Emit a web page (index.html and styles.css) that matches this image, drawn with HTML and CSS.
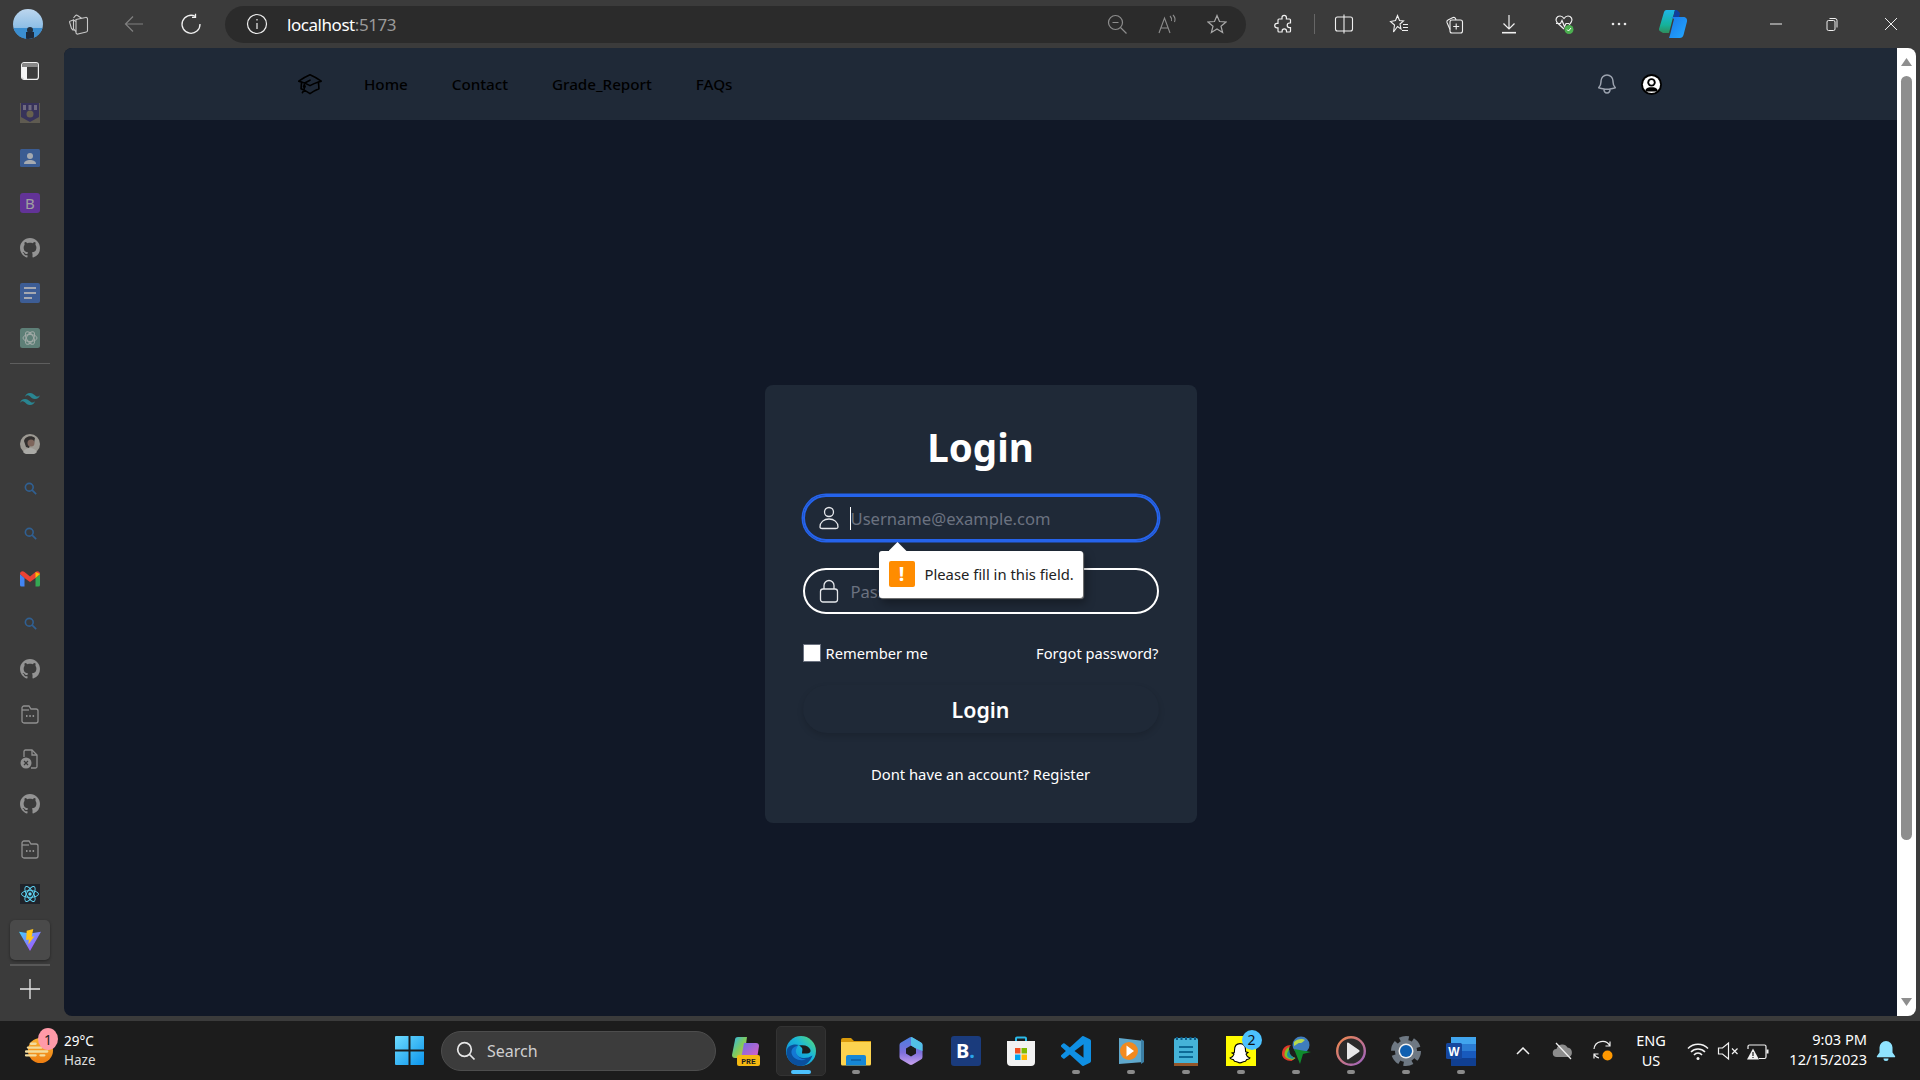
FILE: index.html
```html
<!DOCTYPE html>
<html lang="en">
<head>
<meta charset="utf-8">
<title>Login</title>
<link rel="stylesheet" href="styles.css">
</head>
<body>
<div class="shell">
  <header class="topbar">
    <svg class="avatar" viewBox="0 0 30 30"><defs><linearGradient id="sky" x1="0" y1="0" x2="0" y2="1"><stop offset="0" stop-color="#bcd6ee"/><stop offset=".6" stop-color="#8fbfe6"/><stop offset="1" stop-color="#3f86c6"/></linearGradient><clipPath id="avc"><circle cx="15" cy="15" r="15"/></clipPath></defs><g clip-path="url(#avc)"><rect width="30" height="30" fill="url(#sky)"/><rect y="19" width="30" height="11" fill="#3b8ed0"/><circle cx="17" cy="21" r="3" fill="#26303c"/><rect x="13" y="23" width="8" height="7" fill="#1f2a3a"/></g></svg>
    <span class="slot"><svg class="ico-tabs" viewBox="0 0 22 24" fill="none" stroke="#c8c8c8" stroke-width="1.100"><path d="M9 7.500 18.500 5.500A1.500 1.500 0 0 1 20.500 7V18.500a1.500 1.500 0 0 1-1.200 1.500L11 22a1.500 1.500 0 0 1-2-1.500z"/><path d="M9 9.500 6.500 8V17l2.500 2.500"/><path d="M14.500 6.300 10.500 3.500a1.500 1.500 0 0 0-2 .2L6.500 6"/><path d="M6.500 8 3.500 9a1 1 0 0 0-.8 1.500L4.500 16.500l2 2"/></svg></span>
    <span class="slot"><svg class="ico" viewBox="0 0 20 20" fill="none" stroke="#808080" stroke-width="1.200"><path d="M19 10H1.500M9 2.500 1.500 10 9 17.500"/></svg></span>
    <span class="slot"><svg class="ico-lg" viewBox="0 0 22 22" fill="none" stroke="#f0f0f0" stroke-width="1.300"><path d="M15.500 3.500A9 9 0 1 0 20 11"/><path d="M15.500 .8V4.300H12"/></svg></span>
    <div class="address">
      <svg class="info" viewBox="0 0 22 22" fill="none" stroke="#eee" stroke-width="1.200"><circle cx="11" cy="11" r="9.500"/><path d="M11 10v6M11 6v1.600"/></svg>
      <span class="url">localhost<span class="url-port">:5173</span></span>
      <div class="addr-tools">
        <span class="tool"><svg class="ico" viewBox="0 0 20 20" fill="none" stroke="#8d8d8d" stroke-width="1.200"><circle cx="8.500" cy="8.500" r="7"/><path d="M5.500 8.500h6M13.500 13.500l6 6"/></svg></span>
        <span class="tool"><svg class="ico" viewBox="0 0 20 20" fill="none" stroke="#8d8d8d" stroke-width="1.100"><path d="M2 19 7.500 4 13 19M4 14h7M13 2c1.500 1.500 2 3 1.500 5M16 1c2 2 2.500 4.500 1.500 7"/></svg></span>
        <span class="tool"><svg class="ico" viewBox="0 0 20 20" fill="none" stroke="#a8a8a8" stroke-width="1.200"><path d="M10 1.500 12.500 7.500 19 8 14 12.200 15.600 18.500 10 15 4.400 18.500 6 12.200 1 8 7.500 7.500z"/></svg></span>
      </div>
    </div>
    <div class="browser-tools">
      <span class="slot55"><svg class="ico" viewBox="0 0 20 20" fill="none" stroke="#f0f0f0" stroke-width="1.200"><path d="M8 3.500a2.200 2.200 0 0 1 4.400 0V5h3.100a1 1 0 0 1 1 1v3h-1a2.300 2.300 0 0 0 0 4.600h1V17a1 1 0 0 1-1 1h-3v-1a2.200 2.200 0 0 0-4.400 0v1H5a1 1 0 0 1-1-1v-3.100H3a2.300 2.300 0 0 1 0-4.600h1V6a1 1 0 0 1 1-1h3z"/></svg></span>
      <i class="divider"></i>
      <span class="slot55"><svg class="ico" viewBox="0 0 20 20" fill="none" stroke="#f0f0f0" stroke-width="1.100"><rect x="1.500" y="3" width="17" height="14" rx="2"/><path d="M10 .5v19"/></svg></span>
      <span class="slot55"><svg class="ico" viewBox="0 0 20 20" fill="none" stroke="#f0f0f0" stroke-width="1.100"><path d="M8.500 1.500 10.500 6.500 14.500 7 11 10 12 15 8.500 12.500 4.500 18 5.500 11 1.500 7.500 6.500 6.500z"/><path d="M14 10.500h5M14 13.500h5M13 16.500h6"/></svg></span>
      <span class="slot55"><svg class="ico" viewBox="0 0 20 20" fill="none" stroke="#f0f0f0" stroke-width="1.100"><rect x="6" y="6" width="12.500" height="13" rx="2"/><path d="M12.200 9.500v6M9.200 12.500h6M6 15.500 3 8.500a2 2 0 0 1 1-2.500l5-2.500a2 2 0 0 1 2.500 1L12 6"/></svg></span>
      <span class="slot55"><svg class="ico" viewBox="0 0 20 20" fill="none" stroke="#f0f0f0" stroke-width="1.200"><path d="M10 1v14M4.500 9.500 10 15l5.500-5.500"/><path d="M3 18.700h14" stroke-width="1.600"/></svg></span>
      <span class="slot55"><svg class="ico" viewBox="0 0 20 20" fill="none" stroke="#f0f0f0" stroke-width="1.200"><path d="M10 15 3 8.500C.5 5.500 3 2 6 2c2 0 3 1 4 2.500C11 3 12 2 14 2c3 0 5.500 3.500 3 6.500L15 11"/><path d="M2 9.500h4.500l1.500-3 2.500 6 1.500-3h3"/><circle cx="15" cy="15.500" r="4.500" fill="#4caf50" stroke="none"/><path d="M13 15.500l1.500 1.500 2.500-3" stroke="#fff" stroke-width="1"/></svg></span>
      <span class="slot55"><svg class="ico" viewBox="0 0 20 20" fill="#e8e8e8"><circle cx="4" cy="10" r="1.300"/><circle cx="10" cy="10" r="1.300"/><circle cx="16" cy="10" r="1.300"/></svg></span>
      <span class="slot55 slot-copilot"><svg class="ico-copilot" viewBox="0 0 30 30"><defs><linearGradient id="cpa" x1="0" y1="0" x2="0" y2="1"><stop offset="0" stop-color="#1fb6e8"/><stop offset=".65" stop-color="#15b29a"/><stop offset="1" stop-color="#2f8d5c"/></linearGradient><linearGradient id="cpb" x1="0" y1="0" x2="1" y2="1"><stop offset="0" stop-color="#1a78e8"/><stop offset="1" stop-color="#23a9ff"/></linearGradient></defs><path d="M8 1h9l-.5 1.500L11 24H5L1.800 22A2 2 0 0 1 1 20L6 3a3 3 0 0 1 2-2z" fill="url(#cpa)"/><path d="M17 1h2l3 3-1 5h-6z" fill="#0f3f9e"/><path d="M13 8h12c3 0 4.500 2 4 4.500L25.500 26a4 4 0 0 1-4 3H11l1-3 4-16z" fill="url(#cpb)"/></svg></span>
      <div class="win-controls">
        <span class="win"><svg class="ico-sm" viewBox="0 0 14 14" stroke="#eee"><path d="M1 7h12"/></svg></span>
        <span class="win"><svg class="ico-sm" viewBox="0 0 14 14" fill="none" stroke="#eee"><rect x="2" y="3.500" width="8" height="10" rx="1.500"/><path d="M4.500 1.500H10a2 2 0 0 1 2 2v7"/></svg></span>
        <span class="win win-close"><svg class="ico-sm" viewBox="0 0 14 14" stroke="#eee"><path d="M1 1l12 12M13 1 1 13"/></svg></span>
      </div>
    </div>
  </header>

  <div class="middle">
    <aside class="side">
      <span class="side-item side-first"><svg class="side-tab" viewBox="0 0 18 18"><rect x=".6" y=".6" width="16.800" height="16.800" rx="2.500" fill="#3b3b3b" stroke="#f0f0f0" stroke-width="1.200"/><path d="M1 3a2 2 0 0 1 2-2h12a2 2 0 0 1 2 2v2H1z" fill="#888"/><path d="M1 5h5v12H3a2 2 0 0 1-2-2z" fill="#f4f4f4"/></svg></span>
      <span class="side-item dim"><svg class="side-ico" viewBox="0 0 20 20"><rect width="20" height="20" fill="#75705f"/><path d="M1 0h18v14l-9 5-9-5z" fill="#352f6e"/><path d="M3 2h3v5H3zM8.500 2h3v5h-3zM14 2h3v5h-3z" fill="#8f88a8"/><circle cx="10" cy="11" r="3.500" fill="#85795a"/></svg></span>
      <span class="side-item dim"><svg class="side-ico" viewBox="0 0 20 20"><rect y="1" width="20" height="18" rx="1.500" fill="#3c71c8"/><circle cx="10" cy="8" r="3" fill="#e8eef8"/><path d="M4 16c0-3 3-4 6-4s6 1 6 4z" fill="#e8eef8"/></svg></span>
      <span class="side-item dim"><span class="boot">B</span></span>
      <span class="side-item dim"><svg class="side-ico" viewBox="0 0 16 16" fill="#c9c9c9"><path d="M8 0C3.580 0 0 3.580 0 8c0 3.540 2.290 6.530 5.470 7.590.4.070.55-.17.55-.38 0-.19-.01-.82-.01-1.490-2.010.37-2.530-.49-2.690-.94-.09-.23-.48-.94-.82-1.130-.28-.15-.68-.52-.01-.53.63-.01 1.080.58 1.230.82.720 1.210 1.870.87 2.330.66.070-.52.28-.87.51-1.070-1.780-.2-3.640-.89-3.640-3.950 0-.87.31-1.590.82-2.150-.08-.2-.36-1.020.08-2.120 0 0 .67-.21 2.200.82.64-.18 1.320-.27 2-.27.68 0 1.360.09 2 .27 1.530-1.040 2.200-.82 2.200-.82.44 1.100.16 1.920.08 2.120.51.56.82 1.270.82 2.150 0 3.070-1.870 3.750-3.650 3.950.29.25.54.73.54 1.480 0 1.070-.01 1.930-.01 2.200 0 .21.15.46.55.38A8.013 8.013 0 0 0 16 8c0-4.420-3.580-8-8-8z"/></svg></span>
      <span class="side-item dim"><svg class="side-ico" viewBox="0 0 20 20"><rect width="20" height="20" rx="2" fill="#3f73cc"/><path d="M4 5h12M4 10h12M4 15h8" stroke="#e6ecf8" stroke-width="2"/></svg></span>
      <span class="side-item dim"><svg class="side-ico" viewBox="0 0 20 20"><rect width="20" height="20" rx="2.500" fill="#74aa9c"/><g fill="none" stroke="#dfeee9" stroke-width="1"><ellipse cx="10" cy="10" rx="7" ry="3.500"/><ellipse cx="10" cy="10" rx="7" ry="3.500" transform="rotate(60 10 10)"/><ellipse cx="10" cy="10" rx="7" ry="3.500" transform="rotate(120 10 10)"/></g></svg></span>
      <i class="side-sep"></i>
      <span class="side-item dim"><svg class="side-ico" viewBox="0 0 54 33" fill="#1fb3c6"><path d="M27 0c-7.200 0-11.700 3.600-13.500 10.800 2.700-3.600 5.850-4.950 9.450-4.050 2.054.513 3.522 2.004 5.147 3.653C30.744 13.090 33.808 16.200 40.500 16.200c7.200 0 11.700-3.600 13.500-10.800-2.700 3.600-5.850 4.950-9.450 4.050-2.054-.513-3.522-2.004-5.147-3.653C36.756 3.110 33.692 0 27 0zM13.500 16.200C6.300 16.200 1.800 19.800 0 27c2.700-3.600 5.850-4.950 9.450-4.050 2.054.514 3.522 2.004 5.147 3.653C17.244 29.290 20.308 32.400 27 32.400c7.200 0 11.700-3.600 13.500-10.800-2.700 3.600-5.850 4.950-9.450 4.050-2.054-.513-3.522-2.004-5.147-3.653C23.256 19.310 20.192 16.200 13.500 16.200z"/></svg></span>
      <span class="side-item dim"><svg class="side-ico" viewBox="0 0 20 20"><circle cx="10" cy="10" r="10" fill="#d8d3c8"/><path d="M4 7c1-5 8-6 11-3l-1 5-3-1-2 6-3-1z" fill="#2f2a28"/><circle cx="11" cy="9" r="3.500" fill="#a88070"/><path d="M3 18c2-3 4-4 7-4s5 1 7 4a10 10 0 0 1-14 0z" fill="#efeee8"/></svg></span>
      <span class="side-item dim"><svg class="side-search" viewBox="0 0 16 16" fill="none" stroke="#2a77c8" stroke-width="2"><circle cx="6.500" cy="6.500" r="4.800"/><path d="M10 10l5 5"/></svg></span>
      <span class="side-item dim"><svg class="side-search" viewBox="0 0 16 16" fill="none" stroke="#2a77c8" stroke-width="2"><circle cx="6.500" cy="6.500" r="4.800"/><path d="M10 10l5 5"/></svg></span>
      <span class="side-item"><svg class="side-ico" viewBox="0 0 20 16"><path d="M0 3v11a1.500 1.500 0 0 0 1.500 1.500H4.500V7z" fill="#4285f4"/><path d="M15.500 7v8.500h3A1.500 1.500 0 0 0 20 14V3z" fill="#34a853"/><path d="M0 3C0 .5 2.500-.5 4.500 1L10 5.500 15.500 1C17.500-.5 20 .5 20 3l-4.500 4L10 11 4.500 7z" fill="#ea4335"/><path d="M15.500 1 20 3l-4.500 4z" fill="#fbbc04"/></svg></span>
      <span class="side-item dim"><svg class="side-search" viewBox="0 0 16 16" fill="none" stroke="#2a77c8" stroke-width="2"><circle cx="6.500" cy="6.500" r="4.800"/><path d="M10 10l5 5"/></svg></span>
      <span class="side-item dim"><svg class="side-ico" viewBox="0 0 16 16" fill="#c9c9c9"><path d="M8 0C3.580 0 0 3.580 0 8c0 3.540 2.290 6.530 5.470 7.590.4.070.55-.17.55-.38 0-.19-.01-.82-.01-1.490-2.010.37-2.530-.49-2.690-.94-.09-.23-.48-.94-.82-1.130-.28-.15-.68-.52-.01-.53.63-.01 1.080.58 1.230.82.720 1.210 1.870.87 2.330.66.070-.52.28-.87.51-1.070-1.780-.2-3.640-.89-3.640-3.950 0-.87.31-1.590.82-2.150-.08-.2-.36-1.020.08-2.120 0 0 .67-.21 2.200.82.64-.18 1.320-.27 2-.27.68 0 1.360.09 2 .27 1.530-1.040 2.200-.82 2.200-.82.44 1.100.16 1.920.08 2.120.51.56.82 1.270.82 2.150 0 3.070-1.870 3.750-3.650 3.950.29.25.54.73.54 1.480 0 1.070-.01 1.930-.01 2.200 0 .21.15.46.55.38A8.013 8.013 0 0 0 16 8c0-4.420-3.580-8-8-8z"/></svg></span>
      <span class="side-item dim"><svg class="side-ico" viewBox="0 0 20 20" fill="none" stroke="#c4c4c4" stroke-width="1.300"><path d="M2 17V4a2 2 0 0 1 2-2h5l2 3h5a2 2 0 0 1 2 2v10a2 2 0 0 1-2 2H4a2 2 0 0 1-2-2z"/><path d="M2 6h7"/><path d="M6 12h1.500M9.300 12h1.500M12.600 12h1.500" stroke-width="2"/></svg></span>
      <span class="side-item dim"><svg class="side-ico" viewBox="0 0 20 20" fill="none" stroke="#c4c4c4" stroke-width="1.300"><path d="M4 8V2.500A1.500 1.500 0 0 1 5.500 1H12l5 5v11.500a1.500 1.500 0 0 1-1.500 1.500H11"/><path d="M12 1v5h5"/><circle cx="6" cy="14" r="5.500" fill="#c4c4c4" stroke="none"/><path d="M4 12l4 4M8 12l-4 4" stroke="#3b3b3b"/></svg></span>
      <span class="side-item dim"><svg class="side-ico" viewBox="0 0 16 16" fill="#c9c9c9"><path d="M8 0C3.580 0 0 3.580 0 8c0 3.540 2.290 6.530 5.470 7.590.4.070.55-.17.55-.38 0-.19-.01-.82-.01-1.490-2.010.37-2.530-.49-2.690-.94-.09-.23-.48-.94-.82-1.130-.28-.15-.68-.52-.01-.53.63-.01 1.080.58 1.230.82.720 1.210 1.870.87 2.330.66.070-.52.28-.87.51-1.070-1.780-.2-3.640-.89-3.640-3.950 0-.87.31-1.590.82-2.150-.08-.2-.36-1.020.08-2.120 0 0 .67-.21 2.200.82.64-.18 1.320-.27 2-.27.68 0 1.360.09 2 .27 1.530-1.040 2.200-.82 2.200-.82.44 1.100.16 1.920.08 2.120.51.56.82 1.270.82 2.150 0 3.070-1.870 3.750-3.650 3.950.29.25.54.73.54 1.480 0 1.070-.01 1.930-.01 2.200 0 .21.15.46.55.38A8.013 8.013 0 0 0 16 8c0-4.420-3.580-8-8-8z"/></svg></span>
      <span class="side-item dim"><svg class="side-ico" viewBox="0 0 20 20" fill="none" stroke="#c4c4c4" stroke-width="1.300"><path d="M2 17V4a2 2 0 0 1 2-2h5l2 3h5a2 2 0 0 1 2 2v10a2 2 0 0 1-2 2H4a2 2 0 0 1-2-2z"/><path d="M2 6h7"/><path d="M6 12h1.500M9.300 12h1.500M12.600 12h1.500" stroke-width="2"/></svg></span>
      <span class="side-item"><svg class="side-ico" viewBox="0 0 20 20"><rect width="20" height="20" fill="#20232a"/><g fill="none" stroke="#61dafb" stroke-width=".9"><ellipse cx="10" cy="10" rx="8.500" ry="3.400"/><ellipse cx="10" cy="10" rx="8.500" ry="3.400" transform="rotate(60 10 10)"/><ellipse cx="10" cy="10" rx="8.500" ry="3.400" transform="rotate(120 10 10)"/></g><circle cx="10" cy="10" r="1.700" fill="#61dafb"/></svg></span>
      <span class="side-item side-item-active"><span class="side-active"><svg class="side-vite" viewBox="0 0 20 20"><defs><linearGradient id="vt" x1="0" y1="0" x2="1" y2="1"><stop offset="0" stop-color="#41d1ff"/><stop offset="1" stop-color="#bd34fe"/></linearGradient></defs><path d="M0 2.500 10 4l10-1.500L10 20z" fill="url(#vt)"/><path d="M13 0 7 1.500 6.500 10 9 9.500 8.500 14 14 6.500 11.500 7z" fill="#ffc517"/></svg></span></span>
      <i class="side-sep2"></i>
      <span class="side-add"><svg class="side-ico" viewBox="0 0 18 18" stroke="#e8e8e8" stroke-width="1.200"><path d="M9 0v18M0 9h18"/></svg></span>
    </aside>

    <div class="content">
      <nav class="nav">
        <svg class="nav-logo" viewBox="0 0 24 24" fill="none" stroke="#000" stroke-width="1.500" stroke-linecap="round" stroke-linejoin="round"><path d="M4.260 10.147a60.436 60.436 0 0 0-.491 6.347A48.627 48.627 0 0 1 12 20.904a48.627 48.627 0 0 1 8.232-4.410 60.460 60.460 0 0 0-.491-6.347m-15.482 0a50.570 50.570 0 0 0-2.658-.813A59.905 59.905 0 0 1 12 3.493a59.902 59.902 0 0 1 10.399 5.840c-.896.248-1.783.52-2.658.814m-15.482 0A50.697 50.697 0 0 1 12 13.489a50.702 50.702 0 0 1 7.740-3.342M6.750 15a.75.75 0 1 0 0-1.500.75.75 0 0 0 0 1.500zm0 0v-3.675A55.378 55.378 0 0 1 12 8.443m-7.007 11.550A5.981 5.981 0 0 0 6.750 15.750v-1.500"/></svg>
        <div class="nav-links">
          <a class="nav-link">Home</a>
          <a class="nav-link">Contact</a>
          <a class="nav-link">Grade_Report</a>
          <a class="nav-link">FAQs</a>
        </div>
        <div class="nav-right">
          <svg class="nav-bell" viewBox="0 0 24 24" fill="none" stroke="#9ca3af" stroke-width="1.500" stroke-linecap="round" stroke-linejoin="round"><path d="M14.857 17.082a23.848 23.848 0 0 0 5.454-1.310A8.967 8.967 0 0 1 18 9.750V9A6 6 0 0 0 6 9v.75a8.967 8.967 0 0 1-2.312 6.022c1.733.64 3.560 1.085 5.455 1.310m5.714 0a24.255 24.255 0 0 1-5.714 0m5.714 0a3 3 0 1 1-5.714 0"/></svg>
          <svg class="nav-user" viewBox="0 0 20 20"><circle cx="10" cy="10" r="10" fill="#000"/><circle cx="10" cy="10" r="8.200" fill="#fff"/><circle cx="10" cy="8" r="4" fill="#000"/><circle cx="10" cy="8" r="2.200" fill="#fff"/><path d="M4 15.500c1-2.500 3.500-3 6-3s5 .5 6 3l-1 1.200H5z" fill="#000"/></svg>
        </div>
      </nav>
      <main class="main">
        <form class="card">
          <h1 class="title">Login</h1>
          <div class="field field-focus">
            <svg class="field-ico" viewBox="0 0 20 24" fill="none" stroke="#e5e7eb" stroke-width="1.300"><circle cx="10" cy="6" r="4.500"/><path d="M1 21c0-5 4-8 9-8s9 3 9 8c0 1-1 1.500-2 1.500H3c-1 0-2-.5-2-1.500z"/></svg>
            <input class="input" type="text" placeholder="Username@example.com">
            <i class="caret"></i>
          </div>
          <div class="field">
            <svg class="field-ico" viewBox="0 0 20 24" fill="none" stroke="#e5e7eb" stroke-width="1.300"><rect x="1.500" y="10" width="17" height="13" rx="2.500"/><path d="M5 10V6.500a5 5 0 0 1 10 0V10"/></svg>
            <input class="input" type="password" placeholder="Password">
          </div>
          <div class="row">
            <label class="remember"><span class="check"></span>Remember me</label>
            <a class="forgot">Forgot password?</a>
          </div>
          <button class="submit" type="button">Login</button>
          <p class="register">Dont have an account? Register</p>
          <div class="tip">
            <span class="tip-warn">!</span>
            <span class="tip-text">Please fill in this field.</span>
          </div>
        </form>
      </main>
    </div>

    <div class="scrollbar">
      <i class="sb-up"></i>
      <i class="sb-thumb"></i>
      <i class="sb-down"></i>
    </div>
  </div>

  <footer class="taskbar">
    <div class="weather">
      <svg class="weather-ico" viewBox="0 0 30 30"><defs><linearGradient id="sun" x1="0" y1="0" x2="0" y2="1"><stop offset="0" stop-color="#f9b233"/><stop offset="1" stop-color="#ee7d11"/></linearGradient></defs><circle cx="16" cy="15" r="13" fill="url(#sun)"/><path d="M6 8h5M3 12h14M1 16h22M1 20h10M16 20h4" stroke="#f3dc9c" stroke-width="2.400" stroke-linecap="round"/></svg>
      <span class="weather-badge">1</span>
      <div class="weather-text"><span>29°C</span><span class="weather-sub">Haze</span></div>
    </div>
    <svg class="win-logo" viewBox="0 0 29 29"><defs><linearGradient id="wl" x1="0" y1="0" x2="1" y2="1"><stop offset="0" stop-color="#6fdcff"/><stop offset="1" stop-color="#0a94ec"/></linearGradient></defs><path d="M1 0h12.500v13.500H0V1a1 1 0 0 1 1-1zM15.500 0H28a1 1 0 0 1 1 1v12.500H15.500zM0 15.500h13.500V29H1a1 1 0 0 1-1-1zM15.500 15.500H29V28a1 1 0 0 1-1 1H15.500z" fill="url(#wl)"/></svg>
    <div class="search">
      <svg class="search-ico" viewBox="0 0 20 20" fill="none" stroke="#e8e8e8" stroke-width="1.700"><circle cx="8.500" cy="8.500" r="6.800"/><path d="M13.500 13.500l5 5"/></svg>
      <span>Search</span>
    </div>
    <div class="apps">
      <span class="app"><svg class="app-ico" viewBox="0 0 30 30"><defs><linearGradient id="pre" x1="0" y1="0" x2="1" y2="1"><stop offset="0" stop-color="#2ab6ef"/><stop offset=".5" stop-color="#7ecb5e"/><stop offset="1" stop-color="#e5c13e"/></linearGradient><linearGradient id="pre2" x1="0" y1="0" x2="1" y2="1"><stop offset="0" stop-color="#6d6de8"/><stop offset="1" stop-color="#e55fc0"/></linearGradient></defs><path d="M7 1h9l-3 21H4a3 3 0 0 1-3-3L4 4a3 3 0 0 1 3-3z" fill="url(#pre)"/><path d="M13 7h12a3 3 0 0 1 3 3l-2 13H10z" fill="url(#pre2)"/><rect x="6" y="19" width="23" height="11" rx="2" fill="#f5b912"/><text class="pre-text" x="17.500" y="27.700">PRE</text></svg></span>
      <span class="app app-active"><span class="app-box"><svg class="app-ico" viewBox="0 0 30 30"><defs><linearGradient id="edg" x1="1" y1="0" x2="0" y2="1"><stop offset="0" stop-color="#5ee06a"/><stop offset=".4" stop-color="#1ab6d9"/><stop offset="1" stop-color="#0c7fd8"/></linearGradient></defs><circle cx="15" cy="15" r="15" fill="url(#edg)"/><path d="M.5 16C1 9 8 7.500 13 9c-3 1-5 4-3.500 8 2 5 10 7 17 2.500C24 26 19 30 15 30 7 30 .5 24 .5 16z" fill="#0a4f9c"/><path d="M13 9.500c6-1 10 .5 11.500 4.500.5 2-1 3.500-3.500 3.500H16c0-3 2-5.500-3-8z" fill="#1c1c1c"/><path d="M12 10c-2 2-3 5-1.500 8 2 4 6 6 10 5-6 3-14 0-15-6C5 13 8 10 12 10z" fill="#1478d4"/></svg></span></span>
      <span class="app app-open"><svg class="app-ico" viewBox="0 0 30 30"><path d="M0 4a2 2 0 0 1 2-2h8l3 3h17v4H0z" fill="#d99a0b"/><path d="M0 6h30v22a1.500 1.500 0 0 1-1.500 1.500h-27A1.500 1.500 0 0 1 0 28z" fill="#fcd34f"/><path d="M5 21a2 2 0 0 1 2-2h16a2 2 0 0 1 2 2v8.500H5z" fill="#1587d6"/><path d="M10 24h10" stroke="#0c5ea0" stroke-width="1.500"/></svg></span>
      <span class="app"><svg class="app-ico" viewBox="0 0 30 30"><defs><linearGradient id="cbg" x1="0" y1="0" x2="0" y2="1"><stop offset="0" stop-color="#4a7fe0"/><stop offset=".55" stop-color="#7d6fdc"/><stop offset="1" stop-color="#c9a2ee"/></linearGradient></defs><path d="M15 1a3 3 0 0 1 1.500.4L25 6.500a3 3 0 0 1 1.500 2.600V21a3 3 0 0 1-1.500 2.600l-8.500 5a3 3 0 0 1-3 0L5 23.600A3 3 0 0 1 3.500 21V9.100A3 3 0 0 1 5 6.500l8.500-5.100A3 3 0 0 1 15 1z" fill="url(#cbg)"/><path d="M15 9.500 20 12.500v5L15 20.500l-5-3v-5z" fill="#1c1c1c"/><path d="M15 1a3 3 0 0 1 1.500.4L25 6.500a3 3 0 0 1 1.500 2.600V15L20 12.500 15 9.500z" fill="#52c0e6"/></svg></span>
      <span class="app"><span class="booking">B<em class="booking-dot">.</em></span></span>
      <span class="app"><svg class="app-ico" viewBox="0 0 30 30"><path d="M10 6V2.500A1 1 0 0 1 11 1.500h8a1 1 0 0 1 1 1V6" fill="none" stroke="#2bb9e8" stroke-width="2"/><path d="M1 5h28v21a4 4 0 0 1-4 4H5a4 4 0 0 1-4-4z" fill="#f2f2f2"/><rect x="9" y="12" width="5.500" height="5.500" fill="#f25022"/><rect x="15.500" y="12" width="5.500" height="5.500" fill="#7fba00"/><rect x="9" y="18.500" width="5.500" height="5.500" fill="#00a4ef"/><rect x="15.500" y="18.500" width="5.500" height="5.500" fill="#ffb900"/></svg></span>
      <span class="app app-open"><svg class="app-ico" viewBox="0 0 24 24" fill="#0f8fe3"><path d="M23.150 2.587 18.210.21a1.494 1.494 0 0 0-1.705.29l-9.460 8.630-4.120-3.128a.999.999 0 0 0-1.276.057L.327 7.261A1 1 0 0 0 .326 8.740L3.899 12 .326 15.260a1 1 0 0 0 .001 1.479L1.650 17.940a.999.999 0 0 0 1.276.057l4.120-3.128 9.460 8.630a1.492 1.492 0 0 0 1.704.29l4.942-2.377A1.500 1.500 0 0 0 24 20.060V3.939a1.500 1.500 0 0 0-.85-1.352zm-5.146 14.861L10.826 12l7.178-5.448v10.896z"/></svg></span>
      <span class="app app-open"><svg class="app-ico" viewBox="0 0 30 30"><path d="M3 2l25 3v21L3 28z" fill="#5fa8cc"/><path d="M25 3l3 2v21l-3 2z" fill="#3b7fa5"/><circle cx="13" cy="15" r="9" fill="#f28a1f"/><path d="M10.500 9.500 18 15l-7.500 5.500z" fill="#fff"/></svg></span>
      <span class="app app-open"><svg class="app-ico" viewBox="0 0 30 30"><rect x="3" y="2" width="24" height="28" rx="2" fill="#45b3d8"/><rect x="3" y="27" width="24" height="3" fill="#94562a"/><path d="M6 1v3M10.500 1v3M15 1v3M19.500 1v3M24 1v3" stroke="#0c5a86" stroke-width="2"/><path d="M8 11h14M8 16h14M8 21h14" stroke="#0d6a96" stroke-width="2"/></svg></span>
      <span class="app app-open"><span class="snap"><svg class="snap-ghost" viewBox="0 0 20 20"><path d="M10 1.500c3.500 0 5 2.500 5 5.500 0 1 0 1.500.2 2l2 .5-1.700 1.500c.5 2 1.800 3 3.500 3.500-.5 1-2 1.200-3 1.500l-1 1.500c-2 0-3 1.500-5 1.500s-3-1.500-5-1.500l-1-1.500c-1-.3-2.500-.5-3-1.500 1.700-.5 3-1.500 3.500-3.500L2.800 10l2-.5c.2-.5.200-1 .2-2C5 4 6.500 1.500 10 1.500z" fill="#fff" stroke="#000" stroke-width="1"/></svg><span class="snap-badge">2</span></span></span>
      <span class="app app-open"><svg class="app-ico" viewBox="0 0 30 30"><path d="M1 18c0-6 4-9 9-9-2 2-3 4-2.500 7 .5 3 4 5 7 6l-4 3C5 25 1 22 1 18z" fill="#e23b2a"/><path d="M3.500 18.500c0-4 2-6.500 5-7.500-1 3-1 4.500 0 6.500 1 2.500 3 3.500 6 4.500l-3 2c-5-1-8-2.500-8-5.500z" fill="#7fc12a"/><path d="M6 19c0-2.500 1-4 2.500-5 0 2 0 3 1 4.500 1 1.500 2 2.500 4 3l-2 1.500C8 22 6 21 6 19z" fill="#1f8f9c"/><circle cx="20" cy="9" r="8.500" fill="#3f7dbd"/><path d="M13 6c3-3 8-4 11-2-2 1-2 3-5 3s-3 2-6 3z" fill="#b7d94c"/><path d="M13 13 30 16 22 18 19 28z" fill="#0f8a2d"/></svg></span>
      <span class="app app-open"><svg class="app-ico" viewBox="0 0 30 30"><defs><linearGradient id="plr" x1="0" y1="0" x2="1" y2="1"><stop offset="0" stop-color="#f0884a"/><stop offset="1" stop-color="#9c62c4"/></linearGradient></defs><circle cx="15" cy="15" r="13.800" fill="#2b2b2b" stroke="url(#plr)" stroke-width="2.400"/><path d="M11 7.500a1 1 0 0 1 1.500-.8L23 14a1.200 1.200 0 0 1 0 2l-10.500 7.300a1 1 0 0 1-1.500-.8z" fill="#e8e8e8"/></svg></span>
      <span class="app app-open"><svg class="app-ico" viewBox="0 0 30 30"><circle cx="15" cy="15" r="12" fill="none" stroke="#6e7883" stroke-width="6" stroke-dasharray="8.500 4.070"/><circle cx="15" cy="15" r="11" fill="#6e7883"/><circle cx="15" cy="15" r="7.500" fill="#f0f0f0"/><circle cx="15" cy="15" r="6" fill="#0f5fb0"/></svg></span>
      <span class="app app-open"><svg class="app-ico" viewBox="0 0 30 30"><rect x="5" y="1" width="25" height="29" rx="2" fill="#2b7cd3"/><rect x="5" y="1" width="25" height="7" fill="#41a5ee"/><rect x="5" y="15" width="25" height="8" fill="#185abd"/><rect x="5" y="22" width="25" height="8" rx="1" fill="#103f91"/><rect y="7" width="16" height="16" rx="1.500" fill="#15479f"/><text class="word-text" x="8" y="20">W</text></svg></span>
    </div>
    <div class="tray">
      <span class="tray-slot"><svg class="tray-chev" viewBox="0 0 14 8" fill="none" stroke="#f2f2f2" stroke-width="1.500"><path d="M1 7l6-6 6 6"/></svg></span>
      <span class="tray-slot"><svg class="tray-ico" viewBox="0 0 22 22"><path d="M5 17a4 4 0 0 1-.5-8 6 6 0 0 1 11-1.500A5 5 0 0 1 17 17z" fill="#8c8c8c"/><path d="M4 3l15 16" stroke="#f0f0f0" stroke-width="1.200"/></svg></span>
      <span class="tray-slot"><svg class="tray-ico" viewBox="0 0 22 22" fill="none" stroke="#f0f0f0" stroke-width="1.200"><path d="M2 9A8.500 8.500 0 0 1 18 6M18 1.500V6h-4.500"/><path d="M2 14a7 7 0 0 0 5 4M2 18.500V14h4.500"/><circle cx="15.500" cy="15.500" r="5" fill="#ff9800" stroke="none"/></svg></span>
      <span class="tray-lang"><span>ENG</span><span>US</span></span>
      <span class="tray-sys tray-wifi"><svg class="tray-ico" viewBox="0 0 22 22" fill="none" stroke="#f2f2f2" stroke-width="1.500"><path d="M1 8.500a14 14 0 0 1 20 0M4 12a9.500 9.500 0 0 1 14 0M7 15a5 5 0 0 1 8 0"/><circle cx="11" cy="18.500" r="1.500" fill="#f2f2f2" stroke="none"/></svg></span>
      <span class="tray-sys"><svg class="tray-ico" viewBox="0 0 22 22" fill="none" stroke="#f2f2f2" stroke-width="1.200"><path d="M1.500 8v6h4l6 5V3l-6 5z"/><path d="M15 8.500l5.500 5.500M20.500 8.500 15 14"/></svg></span>
      <span class="tray-sys"><svg class="tray-ico" viewBox="0 0 22 22" fill="none" stroke="#f2f2f2" stroke-width="1.200"><path d="M1 9V6.500A1.500 1.500 0 0 1 2.500 5H17.500A1.500 1.500 0 0 1 19 6.500V17a1.500 1.500 0 0 1-1.500 1.500H12"/><path d="M20.500 9.500v4" stroke-width="2"/><path d="M6 8.500 12 19.500H0z" fill="#f2f2f2" stroke="none"/><path d="M6 12v4M6 17v1" stroke="#1c1c1c"/></svg></span>
      <div class="clock"><span>9:03 PM</span><span>12/15/2023</span></div>
      <span class="tray-bell"><svg class="tray-ico" viewBox="0 0 22 22" fill="#8fe3ff"><path d="M11 1a6.500 6.500 0 0 1 6.500 6.500v5l2.500 3.500a.8.800 0 0 1-.7 1.300H2.700a.8.800 0 0 1-.7-1.300L4.500 12.500v-5A6.500 6.500 0 0 1 11 1zM8.500 18.500h5a2.500 2.500 0 0 1-5 0z"/></svg></span>
    </div>
  </footer>
</div>
</body>
</html>
```

FILE: styles.css
```css
* { box-sizing: border-box; }
html, body { margin: 0; height: 100%; overflow: hidden; }
body { background: #3b3b3b; font-family: "Noto Sans", "Open Sans", sans-serif; }
svg { display: block; flex: none; }
.shell { display: flex; flex-direction: column; width: 1920px; height: 1080px; }

/* browser toolbar */
.topbar { display: flex; align-items: center; gap: 12.5px; height: 48px; flex: none; padding-left: 13px; background: #3b3b3b; }
.avatar { width: 30px; height: 30px; }
.slot { display: flex; width: 44px; justify-content: center; }
.ico { width: 20px; height: 20px; }
.ico-tabs { width: 22px; height: 24px; }
.ico-lg { width: 22px; height: 22px; }
.ico-sm { width: 14px; height: 14px; }
.ico-copilot { width: 30px; height: 32px; }
.address { display: flex; align-items: center; width: 1021px; height: 37px; padding: 0 4px 0 21px; border-radius: 19px; background: #2b2b2b; }
.info { width: 22px; height: 22px; }
.url { margin-left: 19px; color: #fff; font-size: 17px; letter-spacing: -.45px; }
.url-port { color: #9a9a9a; }
.addr-tools { display: flex; margin-left: auto; }
.tool { display: flex; width: 50px; justify-content: center; }
.browser-tools { display: flex; align-items: center; flex: 1; margin-left: -2px; padding-right: 1px; }
.slot55 { display: flex; width: 55px; justify-content: center; }
.slot-copilot { margin-left: -1px; }
.divider { width: 1px; height: 20px; margin: 0 2px; background: #666; }
.win-controls { display: flex; margin-left: auto; }
.win { display: flex; width: 56px; justify-content: center; }
.win-close { margin-left: 3px; }

/* middle */
.middle { display: flex; flex: 1; min-height: 0; padding-bottom: 5px; padding-right: 4px; }
.side { display: flex; flex-direction: column; align-items: center; width: 64px; flex: none; padding-right: 4px; }
.side-item { display: flex; align-items: center; justify-content: center; height: 45px; flex: none; }
.side-first { margin-bottom: -3px; }
.side-item-active { margin-top: 1px; }
.dim { opacity: .62; }
.side-ico { width: 20px; height: 20px; }
.side-tab { width: 18px; height: 18px; }
.side-search { width: 13px; height: 13px; }
.boot { display: flex; width: 20px; height: 20px; align-items: center; justify-content: center; border-radius: 3px; background: #7b2fd0; color: #ddd; font-size: 15px; }
.side-sep { width: 40px; height: 1px; margin-top: 3px; margin-bottom: 12px; flex: none; background: #5e5e5e; }
.side-active { display: flex; width: 40px; height: 40px; align-items: center; justify-content: center; border-radius: 5px; background: #4a4a4a; box-shadow: 0 1px 3px rgba(0, 0, 0, .4); }
.side-vite { width: 22px; height: 22px; }
.side-sep2 { width: 40px; height: 2px; margin-top: 2px; flex: none; background: #585858; }
.side-add { margin-top: 13px; }
.content { display: flex; flex-direction: column; flex: 1; min-width: 0; overflow: hidden; border-radius: 8px 0 0 8px; background: #111827; }
.scrollbar { display: flex; flex-direction: column; align-items: center; width: 19px; flex: none; border-radius: 0 8px 8px 0; background: #fff; }
.sb-up { width: 11px; height: 8px; margin-top: 10px; flex: none; background: #8e8e8e; clip-path: polygon(50% 0, 100% 100%, 0 100%); }
.sb-thumb { width: 11px; height: 764px; margin-top: 10px; flex: none; border-radius: 6px; background: #8e8e8e; }
.sb-down { width: 11px; height: 8px; margin-top: 158px; flex: none; background: #8e8e8e; clip-path: polygon(0 0, 100% 0, 50% 100%); }

/* navbar */
.nav { display: flex; align-items: center; height: 72px; flex: none; padding: 0 235px 0 233px; background: #1f2937; }
.nav-logo { width: 26px; height: 26px; }
.nav-links { display: flex; gap: 44px; margin-left: 41px; }
.nav-link { color: #000; font-size: 15.2px; font-weight: 500; }
.nav-right { display: flex; align-items: center; gap: 22px; margin-left: auto; }
.nav-bell { width: 24px; height: 24px; }
.nav-user { width: 21px; height: 21px; }

/* login */
.main { display: flex; justify-content: center; flex: 1; padding-top: 265px; }
.card { position: relative; width: 432px; height: 438px; padding: 40px 38px 0; border-radius: 8px; background: #1f2937; color: #fff; }
.title { margin: 0 0 25px; font-size: 38.5px; font-weight: 700; line-height: 45px; text-align: center; }
.field { position: relative; height: 46px; margin-bottom: 27px; }
.field-ico { position: absolute; left: 16px; top: 11px; width: 20px; height: 24px; }
.input { display: block; width: 100%; height: 100%; padding: 0 16px 0 46px; border: 2px solid #fff; border-radius: 23px; outline: none; background: transparent; color: #fff; font-family: inherit; font-size: 16.6px; }
.input::placeholder { color: #6b7280; opacity: 1; }
.field-focus .input { border-color: #2563eb; box-shadow: 0 0 0 1.5px #2563eb; }
.caret { position: absolute; left: 47px; top: 12px; width: 1px; height: 23px; background: #fff; }
.row { display: flex; align-items: center; justify-content: space-between; height: 24px; margin-top: 0; font-size: 14.7px; }
.remember { display: flex; align-items: center; gap: 5px; }
.check { width: 18px; height: 18px; border: 1px solid #6b7280; background: #fff; }
.forgot { color: #fff; }
.submit { display: block; width: 100%; height: 48px; margin-top: 20px; border: 0; border-radius: 24px; background: #1f2937; box-shadow: 0 3px 6px rgba(0, 0, 0, .14); color: #fff; font-family: inherit; font-size: 21.4px; font-weight: 600; }
.register { margin: 29px 0 0; font-size: 14.8px; line-height: 24px; text-align: center; }
.tip { position: absolute; left: 114px; top: 166px; display: flex; align-items: center; gap: 10px; width: 204px; height: 47px; padding: 0 0 2px 10px; border-radius: 3px; background: #fff; box-shadow: 1px 1px 1px #777, 3px 5px 10px rgba(0, 0, 0, .35); }
.tip::before { content: ""; position: absolute; left: 10px; top: -9px; width: 18px; height: 9px; background: #fff; clip-path: polygon(50% 0, 100% 100%, 0 100%); }
.tip-warn { display: flex; width: 26px; height: 26px; align-items: center; justify-content: center; border-radius: 2px; background: #ff8c00; color: #fff; font-size: 20px; font-weight: 700; }
.tip-text { color: #222; font-size: 14.8px; white-space: nowrap; }

/* taskbar */
.taskbar { display: flex; align-items: center; height: 59px; flex: none; background: #1c1c1c; color: #fff; }
.weather { position: relative; display: flex; align-items: center; width: 395px; height: 100%; padding-left: 25px; flex: none; }
.weather-ico { width: 29px; height: 29px; }
.weather-badge { position: absolute; left: 38px; top: 7px; display: flex; width: 20px; height: 22px; align-items: center; justify-content: center; border-radius: 50%; background: #ff9aa8; color: #222; font-size: 14px; }
.weather-text { display: flex; flex-direction: column; margin-left: 10px; font-size: 13.5px; line-height: 19px; }
.weather-sub { color: #ddd; }
.win-logo { width: 29px; height: 29px; }
.search { display: flex; align-items: center; width: 275px; height: 40px; margin-left: 17px; padding-left: 14px; border: 1px solid #4d4d4d; border-radius: 20px; background: #3c3c3c; color: #cfcfcf; font-size: 16px; flex: none; }
.search-ico { width: 20px; height: 20px; margin-right: 11px; }
.apps { display: flex; margin-left: 2px; flex: none; }
.app { position: relative; display: flex; width: 55px; height: 59px; align-items: center; justify-content: center; }
.app-ico { width: 30px; height: 30px; }
.app-box { display: flex; width: 50px; height: 50px; align-items: center; justify-content: center; border: 1px solid #333; border-radius: 5px; background: #2a2a2a; }
.app-open::after { content: ""; position: absolute; left: 24px; top: 49px; width: 8px; height: 4px; border-radius: 2px; background: #8a8a8a; }
.app-active::after { content: ""; position: absolute; left: 18px; top: 49px; width: 20px; height: 4px; border-radius: 2px; background: #4cc2ff; }
.booking { display: flex; width: 30px; height: 30px; align-items: center; justify-content: center; border-radius: 3px; background: #1a3b7c; color: #fff; font-size: 20px; font-weight: 700; }
.booking-dot { color: #2aa4e8; font-style: normal; }
.snap { position: relative; display: flex; width: 30px; height: 30px; align-items: center; justify-content: center; background: #fffc00; }
.snap-ghost { width: 22px; height: 22px; margin-top: 4px; margin-right: 2px; }
.snap-badge { position: absolute; left: 16px; top: -6px; display: flex; width: 20px; height: 20px; align-items: center; justify-content: center; border-radius: 50%; background: #4cc2ff; color: #111; font-size: 14px; }
.tray { display: flex; align-items: center; flex: none; margin-left: 15px; }
.tray-slot { display: flex; width: 40px; justify-content: center; }
.tray-ico { width: 22px; height: 22px; }
.tray-chev { width: 14px; height: 8px; }
.tray-lang { display: flex; flex-direction: column; align-items: center; width: 56px; margin-top: -2px; font-size: 14.5px; line-height: 20px; }
.tray-sys { display: flex; width: 30px; justify-content: center; }
.tray-wifi { margin-left: 4px; }
.clock { display: flex; flex-direction: column; align-items: flex-end; width: 94px; margin-top: -3px; font-size: 14.6px; line-height: 20px; }
.tray-bell { display: flex; width: 22px; margin-left: 8px; justify-content: center; }
.pre-text { fill: #1c1c1c; font-family: "Liberation Mono", monospace; font-size: 8px; font-weight: 700; text-anchor: middle; }
.word-text { fill: #fff; font-family: "Liberation Sans", sans-serif; font-size: 12px; font-weight: 700; text-anchor: middle; }
```
